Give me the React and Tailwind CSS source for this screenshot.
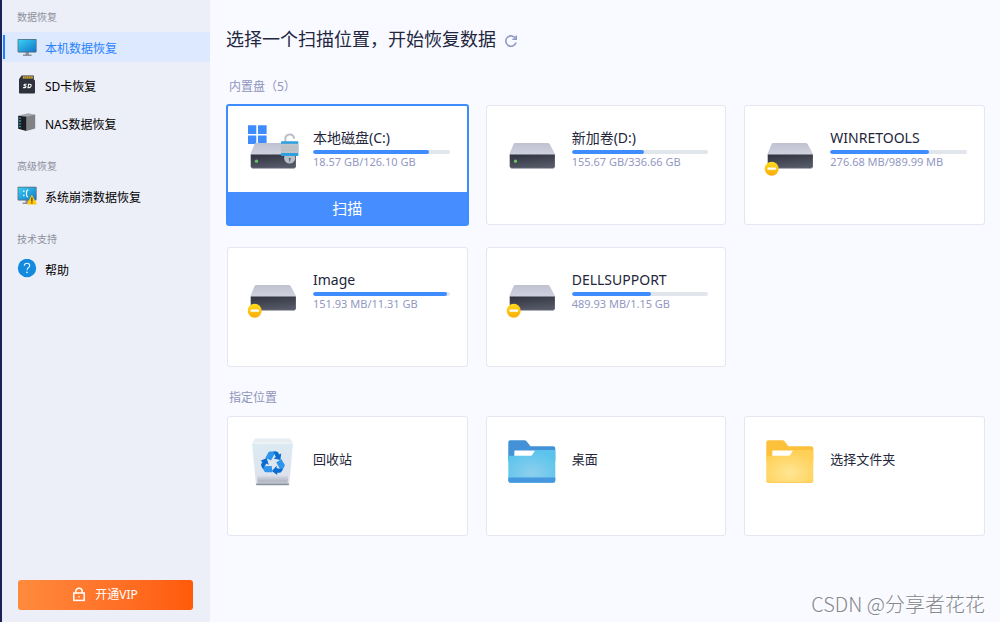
function MonitorIcon() {
  return (
    <svg viewBox="0 0 20 20" className="size-5 shrink-0" aria-hidden="true">
      <defs>
        <linearGradient id="screen" x1="0" y1="0" x2="1" y2="1">
          <stop offset="0" stopColor="#3bd0f2" />
          <stop offset="1" stopColor="#1077cc" />
        </linearGradient>
      </defs>
      <path d="M8.5 14h3.4v4H8.5z" fill="#8f979f" />
      <path d="M6 17.6h8.6v1.2H6z" fill="#757d86" />
      <rect x="0.6" y="2" width="19" height="13.4" rx="0.8" fill="#59636e" />
      <rect x="1.3" y="2.7" width="17.6" height="12" fill="url(#screen)" />
    </svg>
  );
}

function SdCardIcon() {
  return (
    <svg viewBox="0 0 20 20" className="size-5 shrink-0" aria-hidden="true">
      <path d="M4.6.4h12.2v4l1.2 1v12.2a.9.9 0 0 1-.9.9H2.9a.9.9 0 0 1-.9-.9V4.2z" fill="#2e323c" />
      <path d="M5.8 1.2h10v2.4h-10z" fill="#d4aa3c" />
      <path d="M7.7 1.2v2.4M9.7 1.2v2.4M11.8 1.2v2.4M13.8 1.2v2.4" stroke="#6b5420" strokeWidth="0.6" />
      <path
        d="M9.7 9.2H8.1q-1 0-1.1.8t.8.9h.4q.9.1.7.9t-1 .8H6.1M11.6 9.2h1.2q1.6 0 1.3 1.7t-1.9 1.7h-1.2z"
        fill="none"
        stroke="#fff"
        strokeWidth="1.1"
      />
    </svg>
  );
}

function NasIcon() {
  return (
    <svg viewBox="0 0 20 20" className="size-5 shrink-0" aria-hidden="true">
      <path d="M1.4 2.4 11.4.2l6.8 1.6-8.6 2.6z" fill="#a6a8ac" />
      <path d="M9.4 3.8 18.2 1.6v14L9.4 18z" fill="#808286" />
      <path d="M1.2 2.8l8.2 1V18l-8.2-2.2z" fill="#17191d" />
      <path d="M4.8 4.7v11.5M7.1 5v11.8" stroke="#33373d" strokeWidth="0.5" />
      <path d="M2.2 5.2h1.6M2.2 8h1.6M2.2 10.8h1.6M2.2 13.6h1.6" stroke="#24c3e0" strokeWidth="1.3" />
    </svg>
  );
}

function CrashIcon() {
  return (
    <svg viewBox="0 0 20 20" className="size-5 shrink-0" aria-hidden="true">
      <path d="M8.5 13h3v4.5h-3z" fill="#8f979f" />
      <path d="M5.6 16.6h7v1.2h-7z" fill="#757d86" />
      <rect x="0.6" y="0.8" width="19" height="13.6" rx="0.8" fill="#59636e" />
      <rect x="1.3" y="1.5" width="17.6" height="12.2" fill="url(#screen)" />
      <path d="M6.2 4.6h1.3v1.5H6.2zM6.2 8.8h1.3v1.5H6.2z" fill="#fff" />
      <path d="M11.2 3.8q-1.8.4-1.8 3.6t1.8 3.6" fill="none" stroke="#fff" strokeWidth="1.1" />
      <path d="M14.4 9.4q.5-.8 1 0l4.2 8q.4 1-.6 1h-8.3q-1 0-.6-1z" fill="#ffc800" />
      <path d="M14.3 11.6h1.2v3.8h-1.2zM14.3 16.2h1.2v1.2h-1.2z" fill="#3d3208" />
    </svg>
  );
}

function HelpIcon() {
  return (
    <svg viewBox="0 0 20 20" className="size-5 shrink-0" aria-hidden="true">
      <circle cx="10" cy="9" r="9.2" fill="#128ae0" />
      <path
        d="M7.3 6.8Q7.3 4.2 10 4.2t2.7 2.4q0 1.3-1.3 2.2T10 11.2"
        fill="none"
        stroke="#e9f6ff"
        strokeWidth="1.1"
      />
      <circle cx="10" cy="13.4" r="0.8" fill="#e9f6ff" />
    </svg>
  );
}

const NAV = [
  {
    label: "数据恢复",
    items: [
      { text: "本机数据恢复", icon: MonitorIcon, active: true },
      { text: "SD卡恢复", icon: SdCardIcon },
      { text: "NAS数据恢复", icon: NasIcon },
    ],
  },
  { label: "高级恢复", items: [{ text: "系统崩溃数据恢复", icon: CrashIcon }] },
  { label: "技术支持", items: [{ text: "帮助", icon: HelpIcon }] },
];

function Sidebar() {
  return (
    <aside className="flex w-[210px] shrink-0 flex-col border-l-2 border-[#1c2258] bg-[#eceef8] pt-2 pb-3">
      <nav className="flex flex-col gap-[19px]">
        {NAV.map((group) => (
          <section key={group.label} className="flex flex-col gap-2">
            <h2 className="h-4 pl-[15px] text-[10px] leading-[18px] text-[#8d909c]">{group.label}</h2>
            {group.items.map(({ text, icon: Icon, active }) => (
              <a
                key={text}
                href="#"
                aria-current={active ? "page" : undefined}
                className={
                  active
                    ? "flex h-[30px] items-center bg-[#dde9ff] pl-px text-[12px] text-[#2b83fb]"
                    : "flex h-[30px] items-center pl-px text-[12px] text-black"
                }
              >
                <span className={active ? "mr-3 h-6 w-[2px] bg-[#1f7cff]" : "mr-3 h-6 w-[2px]"} />
                <Icon />
                <span className="ml-2 pt-[3px]">{text}</span>
              </a>
            ))}
          </section>
        ))}
      </nav>
      <button
        type="button"
        className="mt-auto mr-[17px] ml-4 flex h-[30px] items-center justify-center gap-[10px] rounded-[3px] bg-linear-to-r from-[#ff8a3d] to-[#ff5a08] text-[12px] text-white"
      >
        <svg viewBox="0 0 12 16" className="h-4 w-3" fill="none" stroke="#fff" strokeWidth="1.5" aria-hidden="true">
          <rect x="0.8" y="6" width="10.4" height="7.4" />
          <path d="M2.8 6V4.4a3.2 3.2 0 0 1 6.4 0V6" />
          <circle cx="6" cy="9.8" r="0.8" fill="#fff" stroke="none" />
        </svg>
        开通VIP
      </button>
    </aside>
  );
}

function DriveIcon({ system, restricted }) {
  return (
    <svg viewBox="0 0 56 56" className="size-14 shrink-0" aria-hidden="true">
      <defs>
        <linearGradient id="driveTop" x1="0" y1="0" x2="0" y2="1">
          <stop offset="0" stopColor="#bfc1d1" />
          <stop offset="1" stopColor="#d2d3e0" />
        </linearGradient>
        <linearGradient id="driveFront" x1="0" y1="0" x2="0.3" y2="1">
          <stop offset="0" stopColor="#30323e" />
          <stop offset="1" stopColor="#555866" />
        </linearGradient>
        <linearGradient id="badge" x1="0" y1="0" x2="0" y2="1">
          <stop offset="0" stopColor="#ffdc1c" />
          <stop offset="1" stopColor="#fbab0c" />
        </linearGradient>
      </defs>
      {system && (
        <path d="M2 5.3h8.3v8.6H2zM12 5.3h8.6v8.6H12zM2 15.6h8.3V24H2zM12 15.6h8.6V24H12z" fill="#3f8cff" />
      )}
      <path d="M10.2 23h32.6q1.2 0 1.8 1l5.2 9.4v2H4.6v-2L8.6 24q.5-1 1.6-1z" fill="url(#driveTop)" />
      <path d="M4.7 34.4h45.2V46.6q0 1.8-1.8 1.8H6.5q-1.8 0-1.8-1.8z" fill="url(#driveFront)" />
      <path d="M5.4 47.4q.4 1 1.6 1h40.6q1.2 0 1.6-1" fill="none" stroke="#aeb0bd" strokeWidth="0.7" />
      {restricted ? (
        <g>
          <circle cx="8.7" cy="48.7" r="7" fill="url(#badge)" />
          <rect x="4.5" y="47.5" width="8.6" height="2.2" rx="0.4" fill="#fff" />
        </g>
      ) : (
        <circle cx="10.5" cy="41.2" r="1.6" fill="#69c868" />
      )}
      {system && (
        <g>
          <path d="M39.4 22v-3.6a4.4 4.4 0 0 1 8.6-.8v1.2" fill="none" stroke="#b9bec8" strokeWidth="2" />
          <circle cx="43.7" cy="38" r="5.6" fill="#b8bfc9" />
          <rect x="35" y="21.2" width="17.3" height="14.8" rx="0.6" fill="#2f9fe0" />
          <rect x="35" y="23.8" width="17.3" height="9.2" fill="#bfc4cb" />
          <path d="M35 27h17.3M35 30h17.3" stroke="#afb5bd" strokeWidth="0.6" />
          <circle cx="43.7" cy="38.8" r="1.1" fill="#616975" />
          <path d="M43.2 39h1v2.8h-1z" fill="#616975" />
        </g>
      )}
    </svg>
  );
}

function RecycleBinIcon() {
  return (
    <svg viewBox="0 0 56 56" className="size-14 shrink-0" aria-hidden="true">
      <defs>
        <linearGradient id="bin" x1="0" y1="0" x2="0.2" y2="1">
          <stop offset="0" stopColor="#dcebf3" />
          <stop offset="1" stopColor="#dee1ec" />
        </linearGradient>
        <linearGradient id="binBase" x1="0" y1="0" x2="0" y2="1">
          <stop offset="0" stopColor="#b4b8c4" stopOpacity="0" />
          <stop offset="0.7" stopColor="#b4b8c4" />
          <stop offset="1" stopColor="#c3c7d1" />
        </linearGradient>
      </defs>
      <path d="M9.2 7.4h34.6L47 12H6z" fill="#e6ecf0" />
      <path d="M6 12h41l-3.8 42H10z" fill="url(#bin)" />
      <path d="M6 12h41" stroke="#f5f9fb" strokeWidth="1" />
      <path d="M11 44h31.2l-.6 8.4H11.7z" fill="url(#binBase)" />
      <path d="M10 52.4h33.2l-.4 1.3q-.1.6-.8.6H11.1q-.7 0-.8-.6z" fill="#8b929f" />
      {[0, 120, 240].map((angle) => (
        <g key={angle} transform={`translate(27 32) rotate(${angle})`}>
          <path d="M-7.6-5.2-4.4-10.8q.5-.8 1.4-.8H3L-2-2.6z" fill="#2f95ec" />
          <path d="M.2-11.6H3q1.4 0 2.2 1.2l1 1.8 2-1L7.4-3 .6-4.6l2.2-1.3z" fill="#0a6bd0" />
        </g>
      ))}
    </svg>
  );
}

function FolderIcon({ blue }) {
  const id = blue ? "folderBlue" : "folderYellow";
  return (
    <svg viewBox="0 0 56 56" className="size-14 shrink-0" aria-hidden="true">
      <defs>
        <radialGradient id={id} cx="0.5" cy="0.7" r="0.65">
          <stop offset="0" stopColor={blue ? "#8dcfee" : "#ffe694"} />
          <stop offset="1" stopColor={blue ? "#5cc4ec" : "#ffd057"} />
        </radialGradient>
      </defs>
      <path
        d="M5.3 9.3h13.9q1.8 0 2.8 1.4l3.4 4.6h22.7q2.2 0 2.2 2.2V30h-47V11.3q0-2 2-2z"
        fill={blue ? "#4391d6" : "#fdc03a"}
      />
      <path d="M9.8 19.6h21L27 25.4H9.3V20.1q0-.5.5-.5z" fill="#fff" />
      <path
        d="M3.3 24.8h22.4q1 0 1.5-.8l2.6-4.2q.5-.8 1.4-.8h19.1v30.5q0 2.2-2.2 2.2H5.5q-2.2 0-2.2-2.2z"
        fill={`url(#${id})`}
      />
      {blue ? (
        <path d="M3.3 46.4h47v3.1q0 2.2-2.2 2.2H5.5q-2.2 0-2.2-2.2z" fill="#4598dd" />
      ) : (
        <path d="M3.5 49.8q.2 1.6 2 1.6h42.6q1.8 0 2-1.6" fill="none" stroke="#fdc548" strokeWidth="0.8" />
      )}
    </svg>
  );
}

const DRIVES = [
  { name: "本地磁盘(C:)", usage: "18.57 GB/126.10 GB", percent: 85, system: true },
  { name: "新加卷(D:)", usage: "155.67 GB/336.66 GB", percent: 53 },
  { name: "WINRETOOLS", usage: "276.68 MB/989.99 MB", percent: 72, restricted: true },
  { name: "Image", usage: "151.93 MB/11.31 GB", percent: 98, restricted: true },
  { name: "DELLSUPPORT", usage: "489.93 MB/1.15 GB", percent: 58, restricted: true },
];

function DriveInfo({ drive }) {
  return (
    <span className="flex gap-[11px] pt-[14px] pr-[17px] pl-[18px] text-left">
      <DriveIcon system={drive.system} restricted={drive.restricted} />
      <span className="flex min-w-0 flex-1 flex-col pt-2">
        <span className="truncate text-[14px] leading-5 text-[#23263a]">{drive.name}</span>
        <span
          role="progressbar"
          aria-label={drive.name}
          aria-valuenow={drive.percent}
          className="mt-[2px] block h-1 overflow-hidden rounded-full bg-[#e1e6ed]"
        >
          <span className="block h-full rounded-full bg-[#3f8cff]" style={{ width: `${drive.percent}%` }} />
        </span>
        <span className="truncate text-[11px] leading-4 text-[#9297c2]">{drive.usage}</span>
      </span>
    </span>
  );
}

function DriveCard({ drive }) {
  if (drive.system) {
    return (
      <div className="flex h-[120px] flex-col rounded-[2px] border border-[#3f8cff] bg-white ring-1 ring-[#3f8cff]">
        <DriveInfo drive={drive} />
        <button type="button" className="mt-auto h-8 bg-[#468eff] text-[15px] leading-8 text-white">
          扫描
        </button>
      </div>
    );
  }
  return (
    <button type="button" className="flex h-[120px] flex-col items-stretch rounded-[3px] border border-[#e4e6f1] bg-white">
      <DriveInfo drive={drive} />
    </button>
  );
}

function LocationCard({ name, children }) {
  return (
    <button
      type="button"
      className="flex h-[120px] items-start gap-[11px] rounded-[3px] border border-[#e4e6f1] bg-white pt-[14px] pl-[18px]"
    >
      {children}
      <span className="pt-[18px] text-[13px] leading-5 text-[#23263a]">{name}</span>
    </button>
  );
}

export default function App() {
  return (
    <div className='relative flex min-h-screen bg-[#f9faff] font-["Noto_Sans","Noto_Sans_CJK_SC",sans-serif]'>
      <Sidebar />
      <main className="min-w-0 flex-1 pt-[25px] pr-[15px] pb-6 pl-4">
        <header className="flex items-center gap-2">
          <h1 className="text-[18px] leading-7 text-[#23263f]">选择一个扫描位置，开始恢复数据</h1>
          <button type="button" aria-label="刷新" className="mt-1">
            <svg viewBox="0 0 14 14" className="size-[14px]" fill="none" stroke="#9298c4" strokeWidth="1.6" aria-hidden="true">
              <path d="M11.6 4.6A5.2 5.2 0 1 0 12 8.6" />
              <path d="M12.2 1.4v3.9H8.3" />
            </svg>
          </button>
        </header>

        <h2 className="mt-6 ml-[3px] text-[12px] leading-5 text-[#8f95bd]">内置盘（5）</h2>
        <div className="mt-2 ml-px grid grid-cols-3 gap-x-[18px] gap-y-[22px]">
          {DRIVES.map((drive) => (
            <DriveCard key={drive.name} drive={drive} />
          ))}
        </div>

        <h2 className="mt-[21px] ml-[3px] text-[12px] leading-5 text-[#8f95bd]">指定位置</h2>
        <div className="mt-2 ml-px grid grid-cols-3 gap-x-[18px]">
          <LocationCard name="回收站">
            <RecycleBinIcon />
          </LocationCard>
          <LocationCard name="桌面">
            <FolderIcon blue />
          </LocationCard>
          <LocationCard name="选择文件夹">
            <FolderIcon />
          </LocationCard>
        </div>
      </main>
      <p className='absolute right-[15px] bottom-1 font-["Noto_Sans_CJK_SC",sans-serif] text-[20px] leading-7 font-light text-[#85878c] text-shadow-[1px_1px_0_#ffffff]'>
        CSDN @分享者花花
      </p>
    </div>
  );
}
